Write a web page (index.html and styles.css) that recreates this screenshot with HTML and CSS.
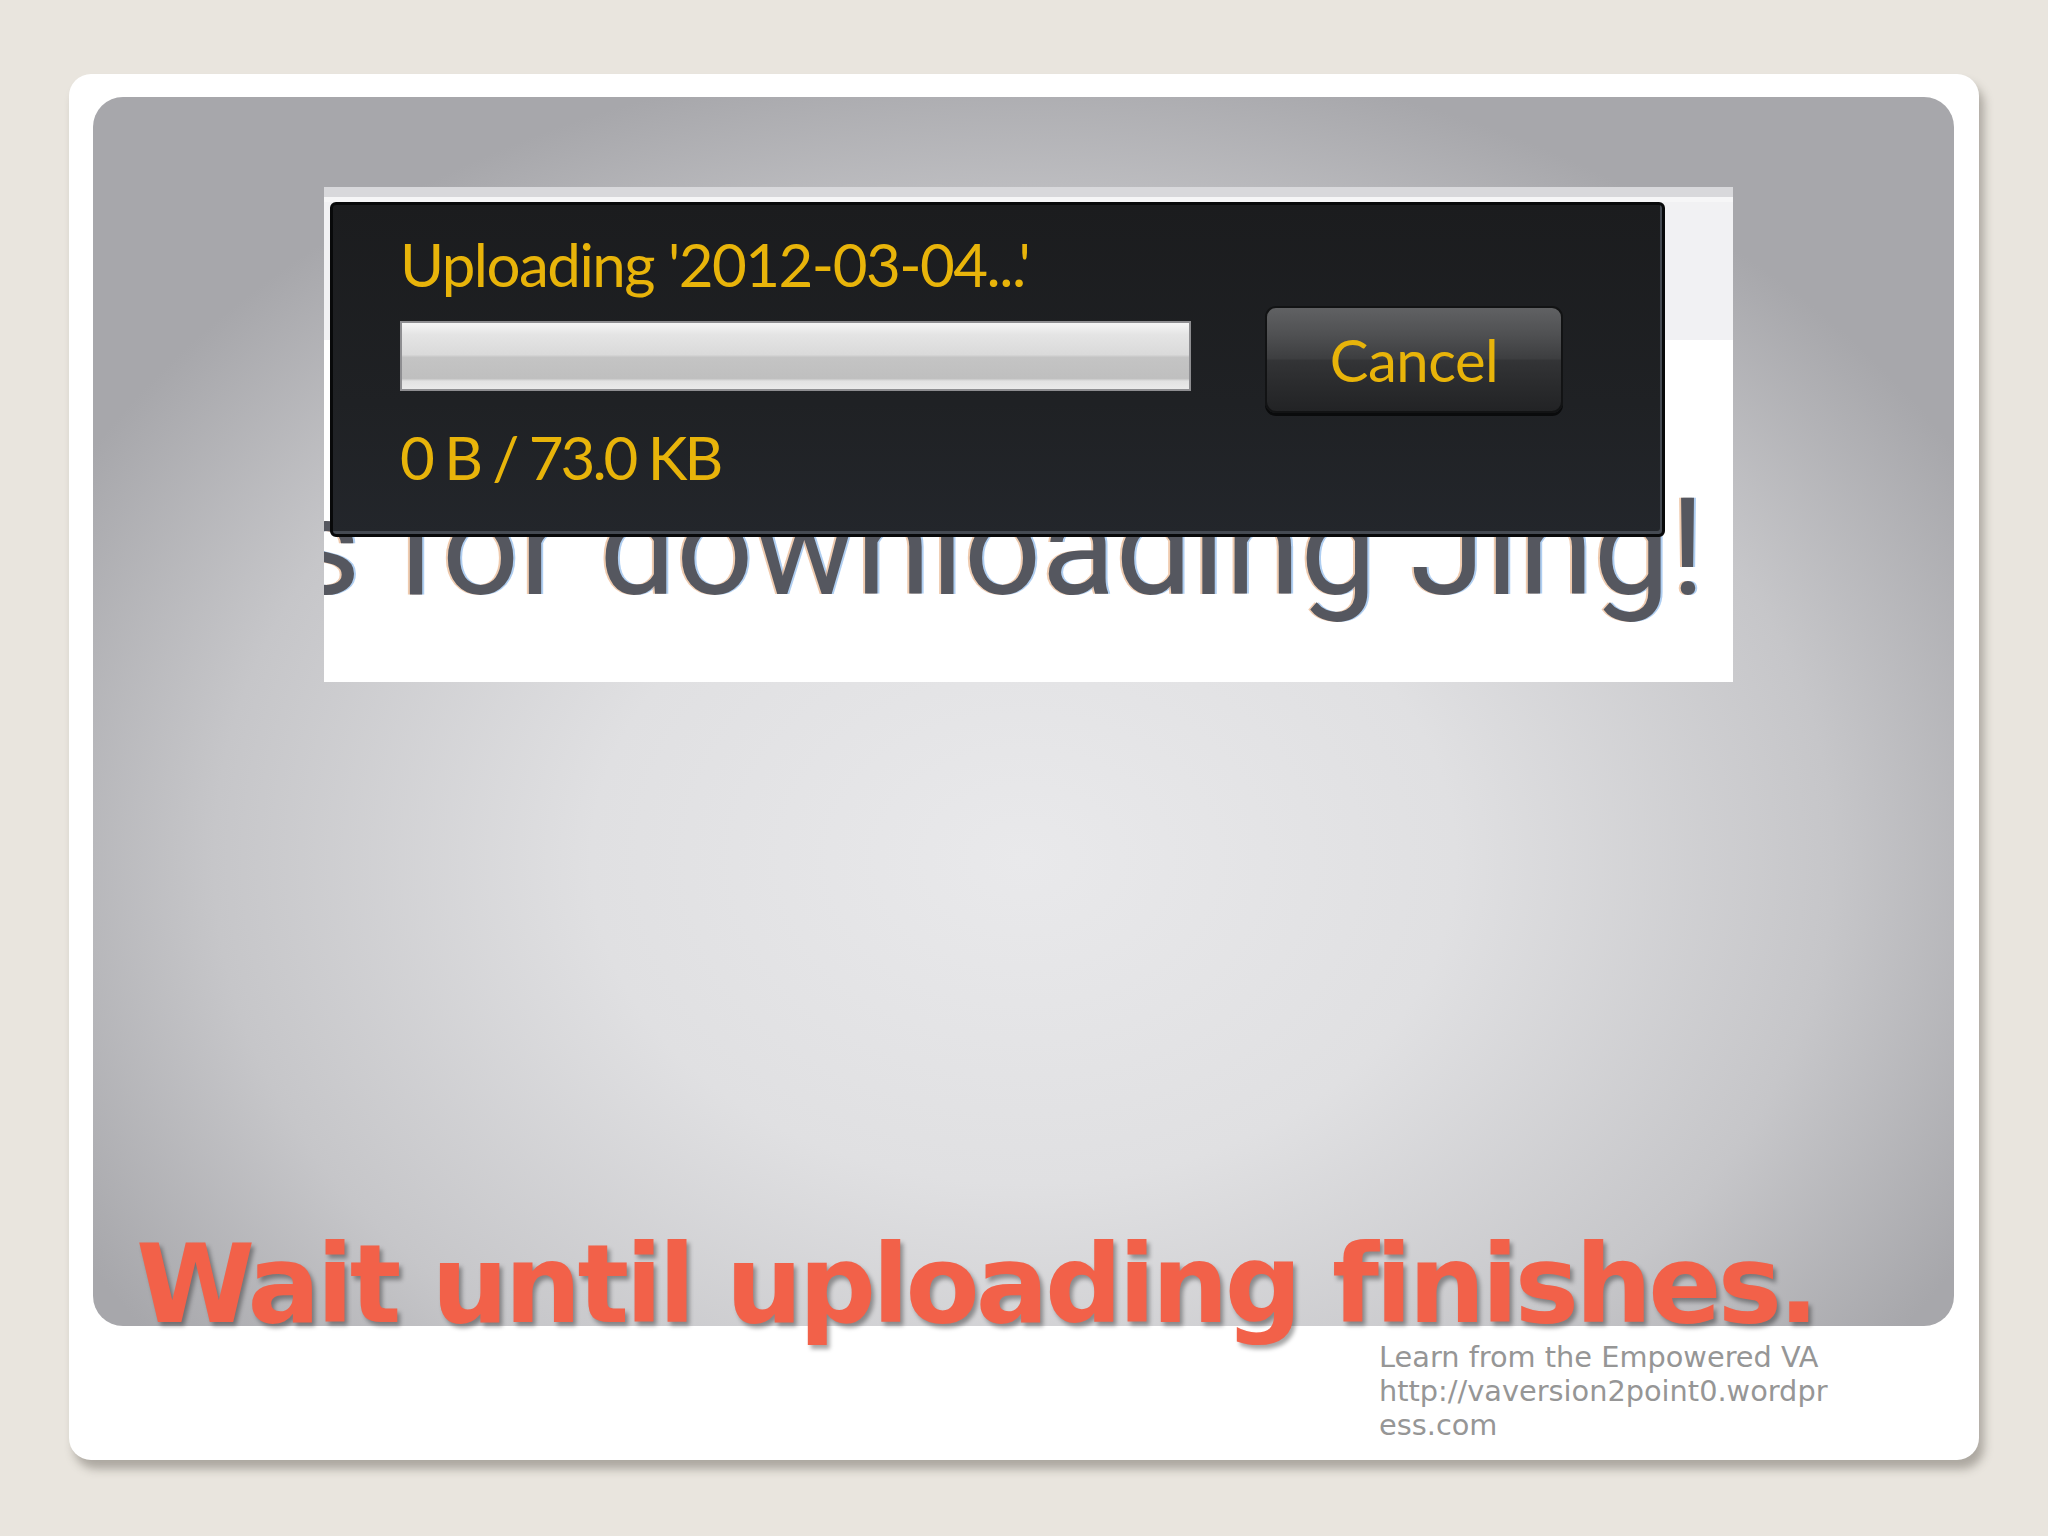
FILE: index.html
```html
<!DOCTYPE html>
<html lang="en">
<head>
<meta charset="utf-8">
<title>Wait until uploading finishes.</title>
<link rel="stylesheet" href="styles.css">
</head>
<body>
<div class="card">
  <div class="stage">
    <div class="shot">
      <div class="panel">
        <div class="panel-left">
          <div class="upl">Uploading '2012-03-04...'</div>
          <div class="bar"></div>
          <div class="size">0 B / 73.0 KB</div>
        </div>
        <div class="cancel">Cancel</div>
      </div>
      <div class="thanks"><span>Thanks for downloading Jing!</span></div>
    </div>
    <h1 class="title">Wait until uploading finishes.</h1>
  </div>
  <div class="footer">
    <div>Learn from the Empowered VA</div>
    <div class="url">http://vaversion2point0.wordpress.com</div>
  </div>
</div>
</body>
</html>
```
FILE: styles.css
```css
html, body {
  margin: 0;
  padding: 0;
}
body {
  background: #e9e5de;
  width: 2048px;
  height: 1536px;
  overflow: hidden;
}
.card {
  box-sizing: border-box;
  margin: 74px 0 0 69px;
  width: 1910px;
  height: 1386px;
  padding: 23px 25px 0 24px;
  background: #ffffff;
  border-radius: 22px;
  box-shadow: 5px 9px 10px rgba(60, 55, 45, 0.35);
}
.stage {
  box-sizing: border-box;
  height: 1229px;
  border-radius: 30px;
  background: radial-gradient(ellipse 58% 66% at 50% 62%, #e9e9eb 0%, #e0e0e2 40%, #c6c6c9 75%, #a7a7ab 100%);
  display: flex;
  flex-direction: column;
  padding-top: 90px;
}
.shot {
  box-sizing: border-box;
  margin-left: 231px;
  width: 1409px;
  height: 495px;
  padding: 15px 0 0 6px;
  background: linear-gradient(to bottom, #d8d8db 0, #d8d8db 10px, #f6f6f7 10px, #f6f6f7 15px, #f1f1f3 15px, #f1f1f3 153px, #ffffff 153px);
  overflow: hidden;
}
.panel {
  position: relative;
  z-index: 2;
  box-sizing: border-box;
  width: 1335px;
  height: 335px;
  border: 3px solid #08090a;
  border-radius: 6px;
  background: linear-gradient(to bottom, #1b1c1e 0%, #1f2124 60%, #23262b 100%);
  box-shadow: inset -2px -3px 0 #454a52;
  display: flex;
  padding: 29px 0 0 67px;
}
.panel-left {
  display: flex;
  flex-direction: column;
  width: 791px;
}
.upl, .size, .cancel {
  font-family: Lato, "Open Sans", sans-serif;
  color: #e8b40a;
  font-size: 60px;
  line-height: 1;
  white-space: nowrap;
}
.upl {
  letter-spacing: -1.5px;
}
.bar {
  box-sizing: border-box;
  margin-top: 27px;
  height: 70px;
  border: 2px solid #8e8e91;
  background: linear-gradient(to bottom, #f6f6f6 0%, #e4e4e4 18%, #dadada 48%, #c4c4c4 52%, #bfbfbf 84%, #e2e2e2 88%, #eaeaea 100%);
}
.size {
  margin-top: 36px;
  letter-spacing: -3px;
}
.cancel {
  box-sizing: border-box;
  margin: 72px 0 0 74px;
  width: 298px;
  height: 107px;
  border: 2px solid #121314;
  border-radius: 11px;
  background: linear-gradient(to bottom, #606163 0%, #505153 25%, #3d3e40 49%, #333436 51%, #2a2b2d 75%, #222325 100%);
  box-shadow: 0 3px 0 #0a0b0c;
  font-size: 58px;
  display: flex;
  align-items: center;
  justify-content: center;
  letter-spacing: -0.5px;
}
.thanks {
  position: relative;
  z-index: 1;
  margin-top: -57px;
  padding-right: 28px;
  display: flex;
  justify-content: flex-end;
  white-space: nowrap;
  font-family: Roboto, "Noto Sans", sans-serif;
  font-size: 136px;
  line-height: 1;
  letter-spacing: 0;
  color: #55575f;
  text-shadow: -2px 0 rgba(225, 160, 110, 0.55), 2px 0 rgba(110, 165, 230, 0.55);
}
.title {
  margin: auto 0 -13px 43px;
  font-family: "DejaVu Sans", Verdana, sans-serif;
  font-weight: bold;
  font-size: 108px;
  line-height: 1;
  color: #f26149;
  letter-spacing: -3.8px;
  white-space: nowrap;
  text-shadow: 3px 4px 4px rgba(0, 0, 0, 0.35);
}
.footer {
  margin: 14px 0 0 1286px;
  width: 456px;
  font-family: "DejaVu Sans", Verdana, sans-serif;
  font-size: 28.8px;
  line-height: 34px;
  color: #969696;
}
.url {
  overflow-wrap: anywhere;
}
```
